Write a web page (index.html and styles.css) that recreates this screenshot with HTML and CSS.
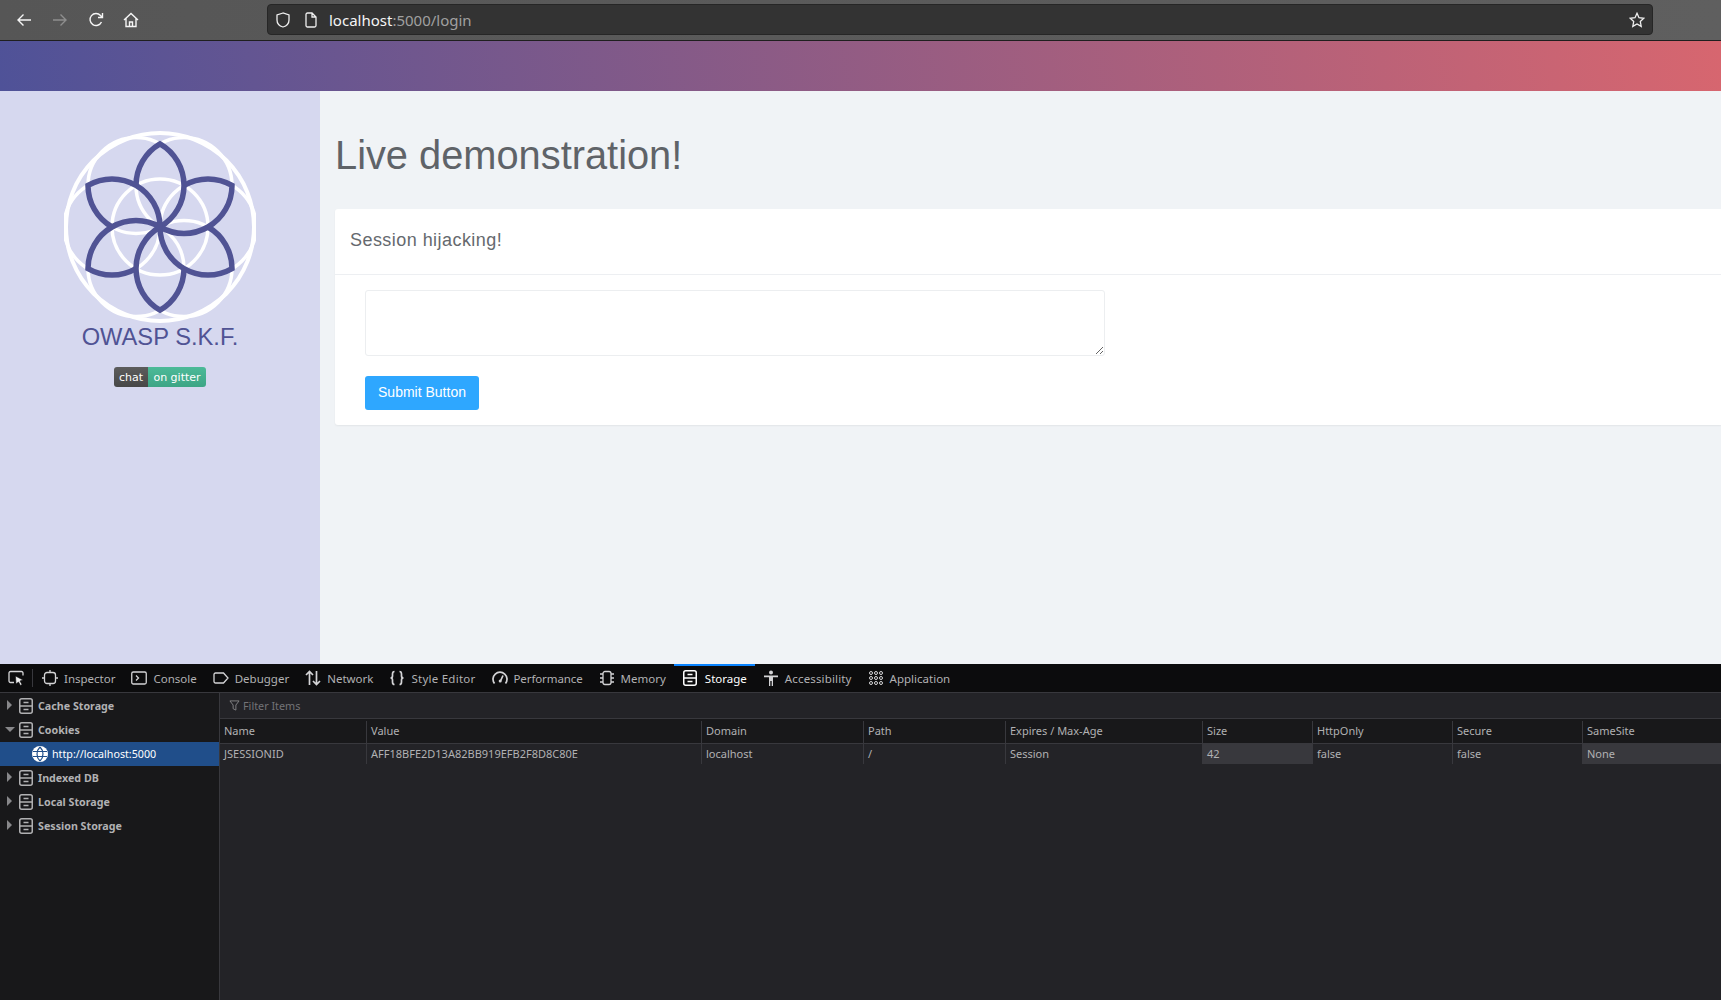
FILE: index.html
```html
<!DOCTYPE html>
<html lang="en">

<head>
    <meta charset="UTF-8">
    <meta name="viewport" content="width=device-width, initial-scale=1.0">
    <title>Live demonstration</title>
    <link rel="stylesheet" href="styles.css">
</head>

<body>
    <svg class="sprites" width="0" height="0">
        <symbol id="i-store" viewBox="0 0 14 16">
            <rect x="0.75" y="0.75" width="12.5" height="14.5" rx="2" fill="none" stroke="currentColor" stroke-width="1.5" />
            <path d="M1 8h12M4.5 4.5h5M4.5 11.5h5" fill="none" stroke="currentColor" stroke-width="1.4" />
        </symbol>
    </svg>

    <header class="browser-bar">
        <div class="nav-icons">
            <svg class="nav-icon" viewBox="0 0 16 16"><path d="M15 8H2M7.5 2.5 2 8l5.5 5.5" /></svg>
            <svg class="nav-icon dim" viewBox="0 0 16 16"><path d="M1 8h13M8.500 2.500 14 8l-5.500 5.500" /></svg>
            <svg class="nav-icon" viewBox="0 0 16 16"><path d="M13.500 10a6 6 0 1 1-1-6.500L14.500 5.500M14.500 1v4.500H10" /></svg>
            <svg class="nav-icon home" viewBox="0 0 16 16"><path d="M1 8 8 1.500 15 8M3 6.500V14.500H13V6.500M6.500 14.500V10H9.500V14.500" /></svg>
        </div>
        <div class="url-bar">
            <svg class="url-icon" viewBox="0 0 16 16"><path d="M8 1 2 3v5c0 3.500 2.500 6 6 7 3.500-1 6-3.500 6-7V3z" /></svg>
            <svg class="url-icon page-icon" viewBox="0 0 16 16"><path d="M3 2.500A1.500 1.500 0 0 1 4.500 1H9l4 4v8.500a1.500 1.500 0 0 1-1.500 1.500h-7A1.500 1.500 0 0 1 3 13.500zM9 1v4h4" /></svg>
            <span class="url-text">localhost<span class="url-rest">:5000/login</span></span>
            <svg class="url-icon star" viewBox="0 0 16 16"><path d="m8 1.300 2 4.400 4.800.6-3.500 3.300.9 4.800L8 12l-4.200 2.400.9-4.800L1.200 6.300 6 5.700z" /></svg>
        </div>
    </header>

    <div class="top-banner"></div>

    <div class="page">
        <aside class="sidebar">
            <svg class="logo" viewBox="-96 -96 192 192">
                <g class="logo-rings">
                    <circle r="94" class="outer-ring" />
                    <circle r="48" />
                    <circle r="48" cx="48" />
                    <circle r="48" cx="24" cy="41.570" />
                    <circle r="48" cx="-24" cy="41.570" />
                    <circle r="48" cx="-48" />
                    <circle r="48" cx="-24" cy="-41.570" />
                    <circle r="48" cx="24" cy="-41.570" />
                </g>
                <g class="logo-petals">
                    <path d="M0 0A48 48 0 0 0 0-83.140A48 48 0 0 0-24-41.570" />
                    <path transform="rotate(60)" d="M0 0A48 48 0 0 0 0-83.140A48 48 0 0 0-24-41.570" />
                    <path transform="rotate(120)" d="M0 0A48 48 0 0 0 0-83.140A48 48 0 0 0-24-41.570" />
                    <path transform="rotate(180)" d="M0 0A48 48 0 0 0 0-83.140A48 48 0 0 0-24-41.570" />
                    <path transform="rotate(240)" d="M0 0A48 48 0 0 0 0-83.140A48 48 0 0 0-24-41.570" />
                    <path transform="rotate(300)" d="M0 0A48 48 0 0 0 0-83.140A48 48 0 0 0-24-41.570" />
                </g>
            </svg>
            <div class="brand">OWASP S.K.F.</div>
            <div class="badge"><span class="badge-left">chat</span><span class="badge-right">on gitter</span></div>
        </aside>
        <main class="content">
            <h1>Live demonstration!</h1>
            <section class="card">
                <div class="card-head">Session hijacking!</div>
                <form class="card-body">
                    <textarea class="input-box"></textarea>
                    <button type="button" class="btn">Submit Button</button>
                </form>
            </section>
        </main>
    </div>

    <section class="devtools">
        <nav class="dev-tabs">
            <span class="picker">
                <svg class="tab-icon" viewBox="0 0 16 16"><path d="M15 5.500V3a1.500 1.500 0 0 0-1.500-1.500h-11A1.500 1.500 0 0 0 1 3v8a1.500 1.500 0 0 0 1.500 1.500H6" /><path class="solid" d="m7.500 6 7.500 4-3 1 2 3.500-1.500 1-2-3.500-2.500 2z" /></svg>
            </span>
            <a class="tab">
                <svg class="tab-icon" viewBox="0 0 16 16"><rect x="2.500" y="2.500" width="11" height="11" rx="2.500" /><path d="M8 0v2.500M8 13.500V16M0 8h2.500M13.500 8H16" /></svg>Inspector</a>
            <a class="tab">
                <svg class="tab-icon" viewBox="0 0 16 16"><rect x="0.750" y="2" width="14.500" height="12" rx="1.500" /><path d="m5 5.500 2.500 2.500L5 10.500" /></svg>Console</a>
            <a class="tab">
                <svg class="tab-icon" viewBox="0 0 16 16"><path d="M2.500 3h8L15 8l-4.500 5h-8A1.500 1.500 0 0 1 1 11.500v-7A1.500 1.500 0 0 1 2.500 3z" /></svg>Debugger</a>
            <a class="tab">
                <svg class="tab-icon" viewBox="0 0 16 16"><path class="heavy" d="M4.500 15V1.500M1 5l3.500-3.500L8 5M11.500 1v13.500M8 11l3.500 3.500L15 11" /></svg>Network</a>
            <a class="tab loose">
                <svg class="tab-icon" viewBox="0 0 16 16"><path class="heavy" d="M5.500 1.500C3.500 1.500 3.500 2.500 3.500 4v2c0 1.200-.8 2-2 2 1.200 0 2 .8 2 2v2c0 1.500 0 2.500 2 2.500M10.500 1.500c2 0 2 1 2 2.500v2c0 1.200.8 2 2 2-1.200 0-2 .8-2 2v2c0 1.500 0 2.500-2 2.500" /></svg>Style Editor</a>
            <a class="tab tight">
                <svg class="tab-icon" viewBox="0 0 16 16"><path class="heavy" d="M2.500 13.500A7 7 0 1 1 13.500 13.500M8.500 11 11 5.500" /><circle cx="8.200" cy="11" r="1.500" class="solid" /></svg>Performance</a>
            <a class="tab">
                <svg class="tab-icon" viewBox="0 0 16 16"><rect x="4" y="1.500" width="8" height="13" rx="2" /><path d="M1 4h3M1 8h3M1 12h3M12 4h3M12 8h3M12 12h3" /></svg>Memory</a>
            <a class="tab active">
                <svg class="tab-icon store-icon"><use href="#i-store" /></svg>Storage</a>
            <a class="tab slack">
                <svg class="tab-icon" viewBox="0 0 16 16"><circle cx="8" cy="2.500" r="2" class="solid" /><path class="solid" d="M1 5.500h14v1.800h-5V16H8.700v-5H7.300v5H6V7.300H1z" /></svg>Accessibility</a>
            <a class="tab">
                <svg class="tab-icon" viewBox="0 0 16 16"><g class="dots"><circle cx="3" cy="3" r="1.500" /><circle cx="8" cy="3" r="1.500" /><circle cx="13" cy="3" r="1.500" /><circle cx="3" cy="8" r="1.500" /><circle cx="8" cy="8" r="1.500" /><circle cx="13" cy="8" r="1.500" /><circle cx="3" cy="13" r="1.500" /><circle cx="8" cy="13" r="1.500" /><circle cx="13" cy="13" r="1.500" /></g></svg>Application</a>
        </nav>
        <div class="dev-main">
            <ul class="tree">
                <li class="tree-row"><span class="caret"></span><svg class="store-icon"><use href="#i-store" /></svg>Cache Storage</li>
                <li class="tree-row"><span class="caret open"></span><svg class="store-icon"><use href="#i-store" /></svg>Cookies</li>
                <li class="tree-row selected">
                    <svg class="globe" viewBox="0 0 16 16">
                        <circle cx="8" cy="8" r="8" fill="#fff" />
                        <path d="M1 5.500h14M1 10.500h14M8 1c-4 4-4 10 0 14M8 1c4 4 4 10 0 14" fill="none" stroke="#204e8a" stroke-width="1.200" />
                    </svg>http://localhost:5000</li>
                <li class="tree-row"><span class="caret"></span><svg class="store-icon"><use href="#i-store" /></svg>Indexed DB</li>
                <li class="tree-row"><span class="caret"></span><svg class="store-icon"><use href="#i-store" /></svg>Local Storage</li>
                <li class="tree-row"><span class="caret"></span><svg class="store-icon"><use href="#i-store" /></svg>Session Storage</li>
            </ul>
            <div class="storage-view">
                <div class="filter-row">
                    <svg class="filter-icon" viewBox="0 0 12 12"><path d="M1 1h10L7.500 5.500V11l-3-1.500v-4z" /></svg>
                    <span>Filter Items</span>
                </div>
                <div class="cols head-row">
                    <div>Name</div>
                    <div>Value</div>
                    <div>Domain</div>
                    <div>Path</div>
                    <div>Expires / Max-Age</div>
                    <div>Size</div>
                    <div>HttpOnly</div>
                    <div>Secure</div>
                    <div>SameSite</div>
                </div>
                <div class="cols data-row">
                    <div>JSESSIONID</div>
                    <div>AFF18BFE2D13A82BB919EFB2F8D8C80E</div>
                    <div>localhost</div>
                    <div>/</div>
                    <div>Session</div>
                    <div class="changed">42</div>
                    <div>false</div>
                    <div>false</div>
                    <div class="changed">None</div>
                </div>
            </div>
        </div>
    </section>
</body>

</html>
```

FILE: styles.css
```css
* {
    box-sizing: border-box;
}

html,
body {
    height: 100%;
}

body {
    margin: 0;
    display: flex;
    flex-direction: column;
    overflow: hidden;
    font-family: "Liberation Sans", Arial, sans-serif;
    background-color: #f0f3f6;
}

.sprites {
    position: absolute;
}

/* browser chrome */
.browser-bar {
    height: 41px;
    flex: none;
    display: flex;
    padding: 4px 68px 0 0;
    background: linear-gradient(to right, #565656, #5f5f5f);
    border-bottom: 1px solid #1f1f1f;
}

.nav-icons {
    width: 267px;
    flex: none;
    display: flex;
    align-items: center;
    height: 31px;
    padding-left: 16px;
    gap: 20px;
}

.nav-icon {
    width: 16px;
    height: 16px;
    fill: none;
    stroke: #f5f5f5;
    stroke-width: 1.4;
}

.nav-icon.dim {
    stroke: #8e8e8e;
}

.nav-icon.home {
    margin-left: -1px;
}

.url-bar {
    flex: 1;
    height: 31px;
    display: flex;
    align-items: center;
    padding: 0 7px 0 7px;
    background-color: #333;
    border: 1px solid #262626;
    border-radius: 4px;
}

.url-icon {
    width: 16px;
    height: 16px;
    flex: none;
    fill: none;
    stroke: #f0f0f0;
    stroke-width: 1.3;
}

.page-icon {
    margin-left: 12px;
}

.url-text {
    margin-left: 10px;
    font-family: "Noto Sans", sans-serif;
    font-size: 15px;
    color: #f5f5f5;
}

.url-rest {
    color: #a0a0a0;
}

.star {
    margin-left: auto;
}

.top-banner {
    height: 50px;
    flex: none;
    background: linear-gradient(80deg, #4f5298, #d7666f);
}

/* page */
.page {
    flex: 1;
    display: flex;
    min-height: 0;
}

.sidebar {
    width: 320px;
    flex: none;
    padding-top: 40px;
    display: flex;
    flex-direction: column;
    align-items: center;
    background-color: #d6d8ef;
}

.logo {
    width: 192px;
    height: 192px;
    display: block;
}

.logo-rings circle {
    fill: none;
    stroke: #fff;
    stroke-width: 3.500;
}

.logo-rings .outer-ring {
    stroke-width: 4;
}

.logo-petals path {
    fill: none;
    stroke: #505394;
    stroke-width: 5.500;
    stroke-linejoin: miter;
}

.brand {
    padding-top: 1px;
    line-height: 26px;
    font-size: 23.700px;
    color: #505394;
}

.badge {
    display: flex;
    height: 20px;
    margin-top: 17px;
    border-radius: 3px;
    overflow: hidden;
    font-family: "DejaVu Sans", sans-serif;
    font-size: 11px;
    line-height: 21px;
    color: #fff;
}

.badge-left {
    width: 34px;
    text-align: center;
    background: linear-gradient(#5c5c5c, #474747);
}

.badge-right {
    width: 58px;
    text-align: center;
    background: linear-gradient(#4cba98, #3da585);
}

.content {
    flex: 1;
    min-width: 0;
    padding: 42px 0 0 15px;
}

h1 {
    margin: 0 0 32px;
    font-size: 39.800px;
    font-weight: 400;
    line-height: 44px;
    color: #5f6368;
}

.card {
    background-color: #fff;
    border-radius: 3px 0 0 3px;
    box-shadow: 0 1px 2px rgba(0, 0, 0, 0.06);
}

.card-head {
    height: 66px;
    padding-left: 15px;
    line-height: 63px;
    font-size: 18px;
    letter-spacing: 0.450px;
    color: #65696e;
    border-bottom: 1px solid #edeff2;
}

.card-body {
    padding: 15px 30px 15px;
}

.input-box {
    display: block;
    width: 740px;
    height: 66px;
    margin-bottom: 20px;
    border: 1px solid #eceef0;
    border-radius: 3px;
    background-color: #fff;
}

.btn {
    display: block;
    width: 114px;
    height: 34px;
    padding: 0 0 2px;
    border: none;
    border-radius: 3px;
    font-family: "Liberation Sans", Arial, sans-serif;
    font-size: 14px;
    color: #fff;
    background-color: #2ea7ff;
}

/* devtools */
.devtools {
    height: 336px;
    flex: none;
    display: flex;
    flex-direction: column;
    font-family: "Noto Sans", sans-serif;
    color: #b1b1b3;
    background-color: #232327;
}

.dev-tabs {
    height: 29px;
    flex: none;
    display: flex;
    background-color: #0c0c0d;
    border-bottom: 1px solid #38383d;
    font-size: 11.500px;
}

.picker {
    width: 34px;
    padding-left: 8px;
    display: flex;
    align-items: center;
    position: relative;
}

.picker::after {
    content: "";
    position: absolute;
    right: 1px;
    top: 5px;
    bottom: 5px;
    width: 1px;
    background-color: #38383d;
}

.tab {
    display: flex;
    align-items: center;
    gap: 6px;
    padding: 0 8px 2px;
    border-top: 2px solid transparent;
    white-space: nowrap;
}

.tab.loose {
    letter-spacing: 0.250px;
}

.tab.tight {
    letter-spacing: -0.100px;
}

.tab.slack {
    letter-spacing: 0.150px;
}

.tab-icon {
    width: 16px;
    height: 16px;
    flex: none;
    fill: none;
    stroke: #d4d4d6;
    stroke-width: 1.300;
}

.tab-icon .heavy {
    stroke-width: 1.700;
}

.tab-icon .solid {
    fill: #d4d4d6;
    stroke: none;
}

.tab-icon .dots {
    stroke-width: 1;
}

.picker .tab-icon .solid {
    fill: #f0f0f0;
    stroke: #0c0c0d;
    stroke-width: 0.600;
}

.tab.active {
    color: #fff;
    border-top-color: #0a84ff;
}

.tab.active .store-icon {
    width: 14px;
    margin: 0 2px 0 1px;
    color: #fff;
    stroke: none;
}

.dev-main {
    flex: 1;
    display: flex;
    min-height: 0;
}

.tree {
    width: 220px;
    flex: none;
    margin: 0;
    padding: 1px 0 0;
    list-style: none;
    background-color: #18181a;
    border-right: 1px solid #38383d;
}

.tree-row {
    position: relative;
    height: 24px;
    display: flex;
    align-items: center;
    padding-left: 19px;
    padding-bottom: 1px;
    font-size: 10.700px;
    font-weight: 700;
    white-space: nowrap;
}

.tree-row .store-icon {
    width: 14px;
    height: 16px;
    margin-right: 5px;
    color: #b1b1b3;
}

.caret {
    position: absolute;
    left: 7px;
    top: 6px;
    border-style: solid;
    border-width: 5px 0 5px 5px;
    border-color: transparent transparent transparent #87878a;
}

.caret.open {
    left: 5px;
    top: 9px;
    border-width: 5px 5px 0 5px;
    border-color: #87878a transparent transparent transparent;
}

.tree-row.selected {
    padding-left: 32px;
    font-weight: 400;
    color: #fff;
    background-color: #204e8a;
}

.globe {
    width: 16px;
    height: 16px;
    margin-right: 4px;
}

.storage-view {
    flex: 1;
    min-width: 0;
}

.filter-row {
    height: 26px;
    display: flex;
    align-items: center;
    gap: 3px;
    padding-left: 9px;
    font-size: 10.800px;
    color: #737377;
    border-bottom: 1px solid #38383d;
}

.filter-icon {
    width: 11px;
    height: 11px;
    fill: none;
    stroke: #87878a;
    stroke-width: 1;
}

.cols {
    display: grid;
    grid-template-columns: 146px 335px 162px 142px 197px 110px 140px 130px 1fr;
    font-size: 11px;
}

.cols > div {
    padding-left: 4px;
    line-height: 20px;
    white-space: nowrap;
    overflow: hidden;
}

.cols > div + div {
    border-left: 1px solid #38383d;
}

.head-row {
    height: 25px;
    padding-top: 2px;
    background-color: #18181a;
    border-bottom: 1px solid #38383d;
}

.data-row {
    height: 20px;
}

.data-row .changed {
    background-color: #38383d;
}
```
